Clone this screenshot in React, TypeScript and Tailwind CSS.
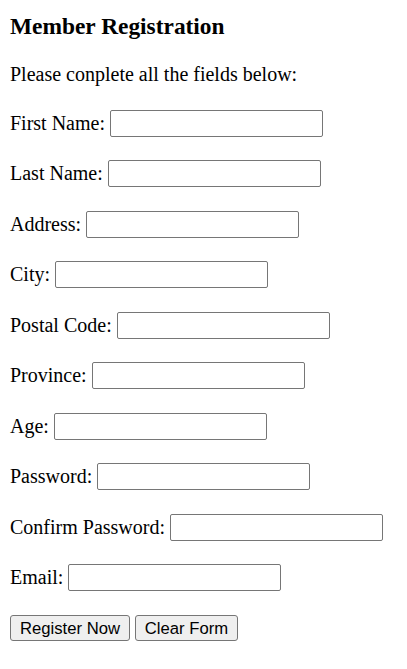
const fields = [
  "First Name",
  "Last Name",
  "Address",
  "City",
  "Postal Code",
  "Province",
  "Age",
  "Password",
  "Confirm Password",
  "Email",
];

export default function App() {
  return (
    <div className="min-h-screen bg-white px-[10px] font-['Liberation_Serif',serif] text-[20px] text-black">
      <h3 className="pt-[13px] text-[23.4px] leading-[27px] font-bold">
        Member Registration
      </h3>
      <p className="mt-[23.4px] leading-[23px]">
        Please conplete all the fields below:
      </p>
      <form className="mt-[23.3px] flex flex-col gap-[23.5px]">
        {fields.map((label) => (
          <div key={label} className="flex h-[27px] items-center">
            <span className="whitespace-pre leading-[23px]">{label}: </span>
            <input
              type={
                label.includes("Password")
                  ? "password"
                  : label === "Email"
                    ? "email"
                    : "text"
              }
              className="h-[27px] w-[213px] rounded-[2px] border border-[#767676] bg-white px-[3px] font-['Liberation_Sans',sans-serif] text-[16.67px]"
            />
          </div>
        ))}
        <div className="flex h-[26px] gap-[5px]">
          <button
            type="submit"
            className="h-[26px] w-[120px] rounded-[3px] border border-[#767676] bg-[#efefef] pt-[1px] font-['Liberation_Sans',sans-serif] text-[16.67px] leading-[19px]"
          >
            Register Now
          </button>
          <button
            type="reset"
            className="h-[26px] w-[103px] rounded-[3px] border border-[#767676] bg-[#efefef] pt-[1px] font-['Liberation_Sans',sans-serif] text-[16.67px] leading-[19px]"
          >
            Clear Form
          </button>
        </div>
      </form>
    </div>
  );
}
